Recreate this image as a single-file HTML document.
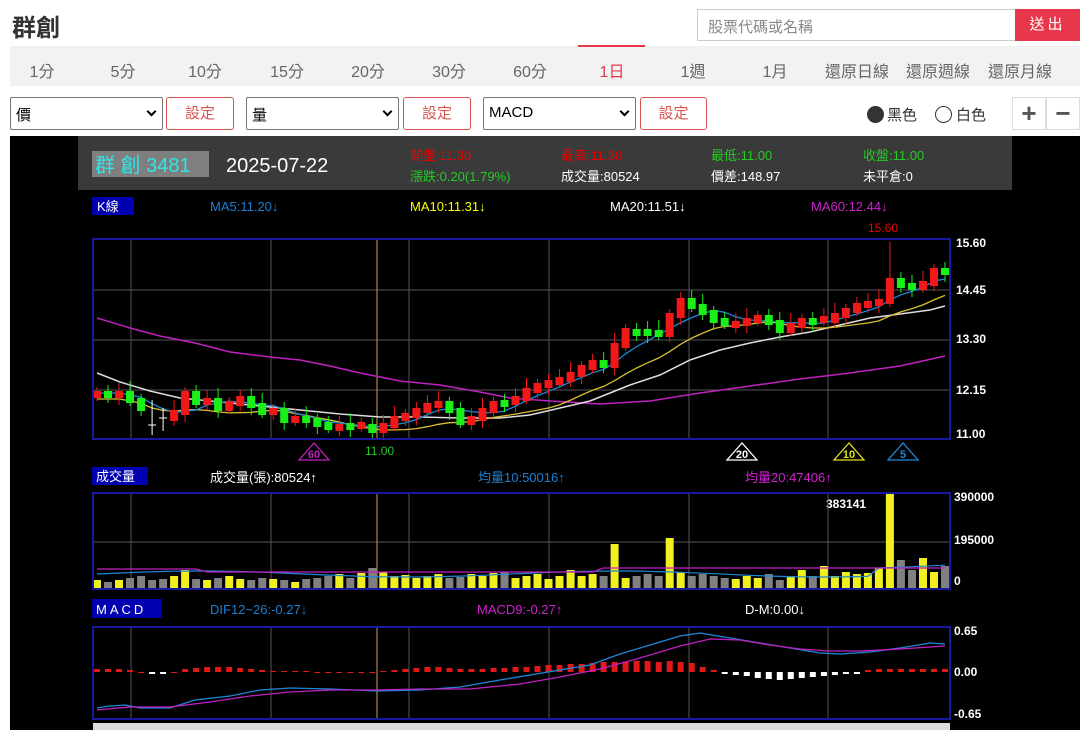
<!DOCTYPE html>
<html><head><meta charset="utf-8">
<style>
*{box-sizing:border-box}
body{margin:0;width:1090px;height:730px;overflow:hidden;background:#fff;font-family:"Liberation Sans","Noto Sans CJK TC",sans-serif;position:relative}
.a{position:absolute}
.title{left:12px;top:8px;font-size:24px;font-weight:bold;color:#333}
.search{left:697px;top:9px;width:319px;height:32px;border:1px solid #ccc;font-size:15px;color:#888;padding:6px 0 0 10px}
.send{left:1015px;top:9px;width:65px;height:32px;background:#e8374a;color:#fff;font-size:15px;text-align:center;line-height:32px;letter-spacing:3px}
.tabs{left:10px;top:46px;width:1070px;height:40px;background:#f2f2f2}
.tab{position:absolute;top:10px;font-size:16px;color:#666;transform:translateX(-50%);white-space:nowrap}
.sel{top:97px;height:33px;border:1px solid #767676;border-radius:2px;font-size:15px;padding:6px 0 0 5px;color:#000;background:#fff}
.sel:after{content:"";position:absolute;right:7px;top:10px;width:5px;height:5px;border-right:2px solid #000;border-bottom:2px solid #000;transform:rotate(45deg)}
.btn{top:97px;height:33px;border:1px solid #d9534f;border-radius:3px;color:#d9534f;font-size:15px;text-align:center;line-height:31px}
.pm{top:97px;width:34px;height:33px;border:1px solid #ddd;font-size:26px;color:#555;text-align:center;line-height:30px;font-weight:bold}
</style></head><body>
<div class="a title">群創</div>
<div class="a search">股票代碼或名稱</div>
<div class="a send">送出</div>
<div class="a tabs"></div>
<div class="a" style="left:578px;top:45px;width:67px;height:2px;background:#e8374a"></div>
<div class="a tab" style="left:42px;top:58px">1分</div>
<div class="a tab" style="left:123px;top:58px">5分</div>
<div class="a tab" style="left:205px;top:58px">10分</div>
<div class="a tab" style="left:287px;top:58px">15分</div>
<div class="a tab" style="left:368px;top:58px">20分</div>
<div class="a tab" style="left:449px;top:58px">30分</div>
<div class="a tab" style="left:530px;top:58px">60分</div>
<div class="a tab" style="left:612px;top:58px;color:#e8374a">1日</div>
<div class="a tab" style="left:693px;top:58px">1週</div>
<div class="a tab" style="left:775px;top:58px">1月</div>
<div class="a tab" style="left:857px;top:58px">還原日線</div>
<div class="a tab" style="left:938px;top:58px">還原週線</div>
<div class="a tab" style="left:1020px;top:58px">還原月線</div>
<div class="a sel" style="left:10px;width:153px">價</div>
<div class="a btn" style="left:166px;width:68px">設定</div>
<div class="a sel" style="left:246px;width:153px">量</div>
<div class="a btn" style="left:403px;width:68px">設定</div>
<div class="a sel" style="left:483px;width:153px">MACD</div>
<div class="a btn" style="left:640px;width:67px">設定</div>
<div class="a" style="left:867px;top:106px;width:17px;height:17px;border-radius:50%;background:#333"></div>
<div class="a" style="left:887px;top:104px;font-size:15px;color:#333">黑色</div>
<div class="a" style="left:935px;top:106px;width:17px;height:17px;border-radius:50%;border:1px solid #333"></div>
<div class="a" style="left:956px;top:104px;font-size:15px;color:#333">白色</div>
<div class="a pm" style="left:1012px">+</div>
<div class="a pm" style="left:1046px">−</div>
<svg class="a" style="left:0;top:0" width="1090" height="730" id="s" font-family="Liberation Sans, Noto Sans CJK TC, sans-serif">
<rect x="10" y="136" width="1070" height="594" fill="#000"/>
<rect x="78" y="136" width="934" height="54" fill="#3a3a3a"/>
<rect x="92" y="151" width="117" height="26" fill="#7f7f7f"/>
<text x="95" y="172" fill="#2ee6e6" font-size="20">群  創 3481</text>
<text x="226" y="172" fill="#fff" font-size="20">2025-07-22</text>
<g font-size="13">
<text x="410" y="160" fill="#e00">開盤:11.30</text>
<text x="410" y="181" fill="#2c2">漲跌:0.20(1.79%)</text>
<text x="561" y="160" fill="#e00">最高:11.30</text>
<text x="561" y="181" fill="#fff">成交量:80524</text>
<text x="711" y="160" fill="#2c2">最低:11.00</text>
<text x="711" y="181" fill="#fff">價差:148.97</text>
<text x="863" y="160" fill="#2c2">收盤:11.00</text>
<text x="863" y="181" fill="#fff">未平倉:0</text>
<rect x="92" y="197" width="42" height="18" fill="#0000b0"/>
<text x="97" y="211" fill="#fff">K線</text>
<text x="210" y="211" fill="#1e7fd0">MA5:11.20↓</text>
<text x="410" y="211" fill="#ff0">MA10:11.31↓</text>
<text x="610" y="211" fill="#fff">MA20:11.51↓</text>
<text x="811" y="211" fill="#d020d0">MA60:12.44↓</text>
<text x="868" y="232" fill="#e00" font-size="12">15.60</text>
<rect x="92" y="467" width="56" height="18" fill="#0000b0"/>
<text x="96" y="481" fill="#fff">成交量</text>
<text x="210" y="482" fill="#fff">成交量(張):80524↑</text>
<text x="478" y="482" fill="#1e7fd0">均量10:50016↑</text>
<text x="745" y="482" fill="#d020d0">均量20:47406↑</text>
<rect x="92" y="599" width="70" height="19" fill="#0000b0"/>
<text x="96" y="614" fill="#fff" letter-spacing="3">MACD</text>
<text x="210" y="614" fill="#1e7fd0">DIF12~26:-0.27↓</text>
<text x="477" y="614" fill="#d020d0">MACD9:-0.27↑</text>
<text x="745" y="614" fill="#fff">D-M:0.00↓</text>
</g>
<g font-size="12" fill="#fff" font-weight="bold">
<text x="956" y="247">15.60</text><text x="956" y="294">14.45</text><text x="956" y="343">13.30</text><text x="956" y="394">12.15</text><text x="956" y="438">11.00</text>
<text x="954" y="501">390000</text><text x="954" y="544">195000</text><text x="954" y="585">0</text>
<text x="826" y="508">383141</text>
<text x="954" y="635">0.65</text><text x="954" y="676">0.00</text><text x="954" y="718">-0.65</text>
</g>
<text x="365" y="455" fill="#2c2" font-size="12">11.00</text>
<g id="g"></g>
<rect x="93" y="723" width="857" height="7" fill="#ddd"/>
</svg>
<script>
(function(){
var g=document.getElementById("g"),h="";
function L(x1,y1,x2,y2,c,w){h+='<line x1="'+x1+'" y1="'+y1+'" x2="'+x2+'" y2="'+y2+'" stroke="'+c+'" stroke-width="'+(w||1)+'"/>';}
function P(pts,c,w){h+='<polyline fill="none" stroke="'+c+'" stroke-width="'+(w||1.3)+'" points="'+pts.map(function(p){return p[0]+','+p[1]}).join(' ')+'"/>';}
var vx=[131,271,409,549,689,828];
[[239,439],[493,589],[627,719]].forEach(function(b){
 vx.forEach(function(x){L(x,b[0],x,b[1],"#555");});
});
[290,340,390].forEach(function(y){L(93,y,950,y,"#555");});
L(93,542,950,542,"#555");
L(377,239,377,439,"#c9a060");L(377,493,377,589,"#c9a060");L(377,627,377,719,"#c9a060");
var c=[393,393,393,400,408,425,418,412,393,402,400,408,403,398,405,412,410,420,418,420,424,427,426,425,426,430,425,418,415,410,405,403,410,422,418,410,403,402,398,390,385,382,379,374,367,362,365,345,330,331,333,334,315,300,306,312,320,323,323,320,317,322,330,325,320,320,320,315,310,305,303,301,280,285,287,283,270,270];
var n=c.length,x0=97,st=(945-97)/(n-1);
function X(i){return +(x0+i*st).toFixed(1);}
function ma(k,off){var r=[];for(var i=0;i<n;i++){var s=0,m=0;for(var j=Math.max(0,i-k+1);j<=i;j++){s+=c[j];m++;}r.push([X(i),(s/m+off).toFixed(1)]);}return r;}
P([[97,318],[130,328],[160,336],[195,343],[230,352],[270,357],[300,360],[330,366],[360,373],[400,381],[440,385],[480,392],[510,398],[550,401],[600,404],[650,401],[700,393],[750,386],[800,379],[850,373],[900,366],[945,356]],"#c020c0",1.5);
P([[97,373],[120,382],[150,391],[180,398],[220,402],[260,406],[300,410],[340,414],[380,417],[420,417],[460,418],[500,418],[530,415],[560,408],[590,401],[610,393],[630,385],[660,375],[690,360],[720,350],[750,343],[780,337],[810,332],[840,325],[870,318],[900,314],[930,310],[945,306]],"#ddd",1.5);
P(ma(10,6),"#d8c030",1.3);
P(ma(5,0),"#1e88d8",1.3);
var vols=[8,6,8,10,12,8,9,12,18,9,8,10,12,9,8,10,9,8,6,9,10,12,14,10,15,20,16,12,13,10,12,14,10,11,14,12,15,16,10,12,14,9,12,18,12,14,12,44,10,12,14,12,50,16,12,14,12,10,9,12,10,14,8,12,18,12,22,12,16,14,15,20,94,28,18,30,16,22,14,18];
for(var i=0;i<n;i++){
 var x=X(i),cl=c[i],op=i?c[i-1]:cl+2;
 var up=cl<op; if(Math.abs(cl-op)<2){op=cl+(i%3?2:-2);up=i%2==0;}
 var col=up?"#f01818":"#18f018"; if(i==5||i==6)col="#fff";
 var tp=Math.min(op,cl)-2,bt=Math.max(op,cl)+3;
 L(x,tp-4-(i%4)*2,x,bt+3+(i%3)*2,col);
 if(i==5||i==6){L(x-4,cl,x+4,cl,col);continue;}
 h+='<rect x="'+(x-4)+'" y="'+tp+'" width="8" height="'+Math.max(6,bt-tp)+'" fill="'+col+'"/>';
 var v=vols[i%vols.length];
 h+='<rect x="'+(x-4)+'" y="'+(588-v)+'" width="8" height="'+v+'" fill="'+(up?"#f0f020":"#808080")+'"/>';
}
[5,6].forEach(function(i){var v=vols[i];h+='<rect x="'+(X(i)-4)+'" y="'+(588-v)+'" width="8" height="'+v+'" fill="#808080"/>';});
L(X(72),242,X(72),300,"#f01818");
var va=[],vb=[];for(var i=0;i<n;i++){va.push([X(i),(588-14-Math.sin(i/6)*3-(i>70?8:0)).toFixed(1)]);vb.push([X(i),(588-16+(i<10?-3:0)-(i>45?4:0)).toFixed(1)]);}
P(va,"#1e88d8",1.2);P(vb,"#c020c0",1.2);
var hs=[3,3,3,2,0,-2,-2,0,3,4,5,5,5,4,3,2,1,1,1,1,0,0,0,0,0,0,1,2,3,4,5,5,4,3,3,3,4,4,5,5,6,7,7,8,8,9,10,10,10,11,11,10,11,10,9,5,2,-2,-3,-4,-6,-7,-8,-7,-6,-5,-4,-3,-2,-2,2,3,3,3,3,3,3,3];
for(var i=0;i<n;i++){var v=hs[i]||0,x=X(i);if(v>=0)h+='<rect x="'+(x-3)+'" y="'+(672-v)+'" width="6" height="'+Math.max(v,1)+'" fill="#e01818"/>';else h+='<rect x="'+(x-3)+'" y="672" width="6" height="'+(-v)+'" fill="#fff"/>';}
P([[97,708],[110,706],[125,705],[140,708],[170,708],[195,700],[230,696],[260,690],[290,688],[330,689],[377,691],[420,690],[460,687],[500,680],[530,675],[560,670],[590,665],[620,654],[650,645],[680,636],[700,633],[730,638],[760,643],[790,648],[820,653],[840,654],[870,652],[900,648],[930,643],[945,644]],"#1e88d8",1.3);
P([[97,710],[130,707],[170,707],[210,702],[250,696],[290,692],[330,690],[377,690],[420,689],[470,689],[520,684],[560,677],[600,669],[640,658],[680,646],[710,639],[740,640],[770,645],[800,649],[830,651],[860,651],[900,649],[945,646]],"#c020c0",1.3);
[[93,239,857,200],[93,493,857,96],[93,627,857,92]].forEach(function(b){h+='<rect x="'+b[0]+'" y="'+b[1]+'" width="'+b[2]+'" height="'+b[3]+'" fill="none" stroke="#1818a0" stroke-width="2"/>';});
function T(x,col,t){h+='<polygon points="'+x+',443 '+(x-15)+',460 '+(x+15)+',460" fill="none" stroke="'+col+'" stroke-width="1.3"/><text x="'+x+'" y="458" fill="'+col+'" font-size="11" text-anchor="middle" font-weight="bold">'+t+'</text>';}
T(314,"#c020c0","60");T(742,"#fff","20");T(849,"#e0e020","10");T(903,"#1e88d8","5");
g.innerHTML=h;
})();
</script>
</body></html>
